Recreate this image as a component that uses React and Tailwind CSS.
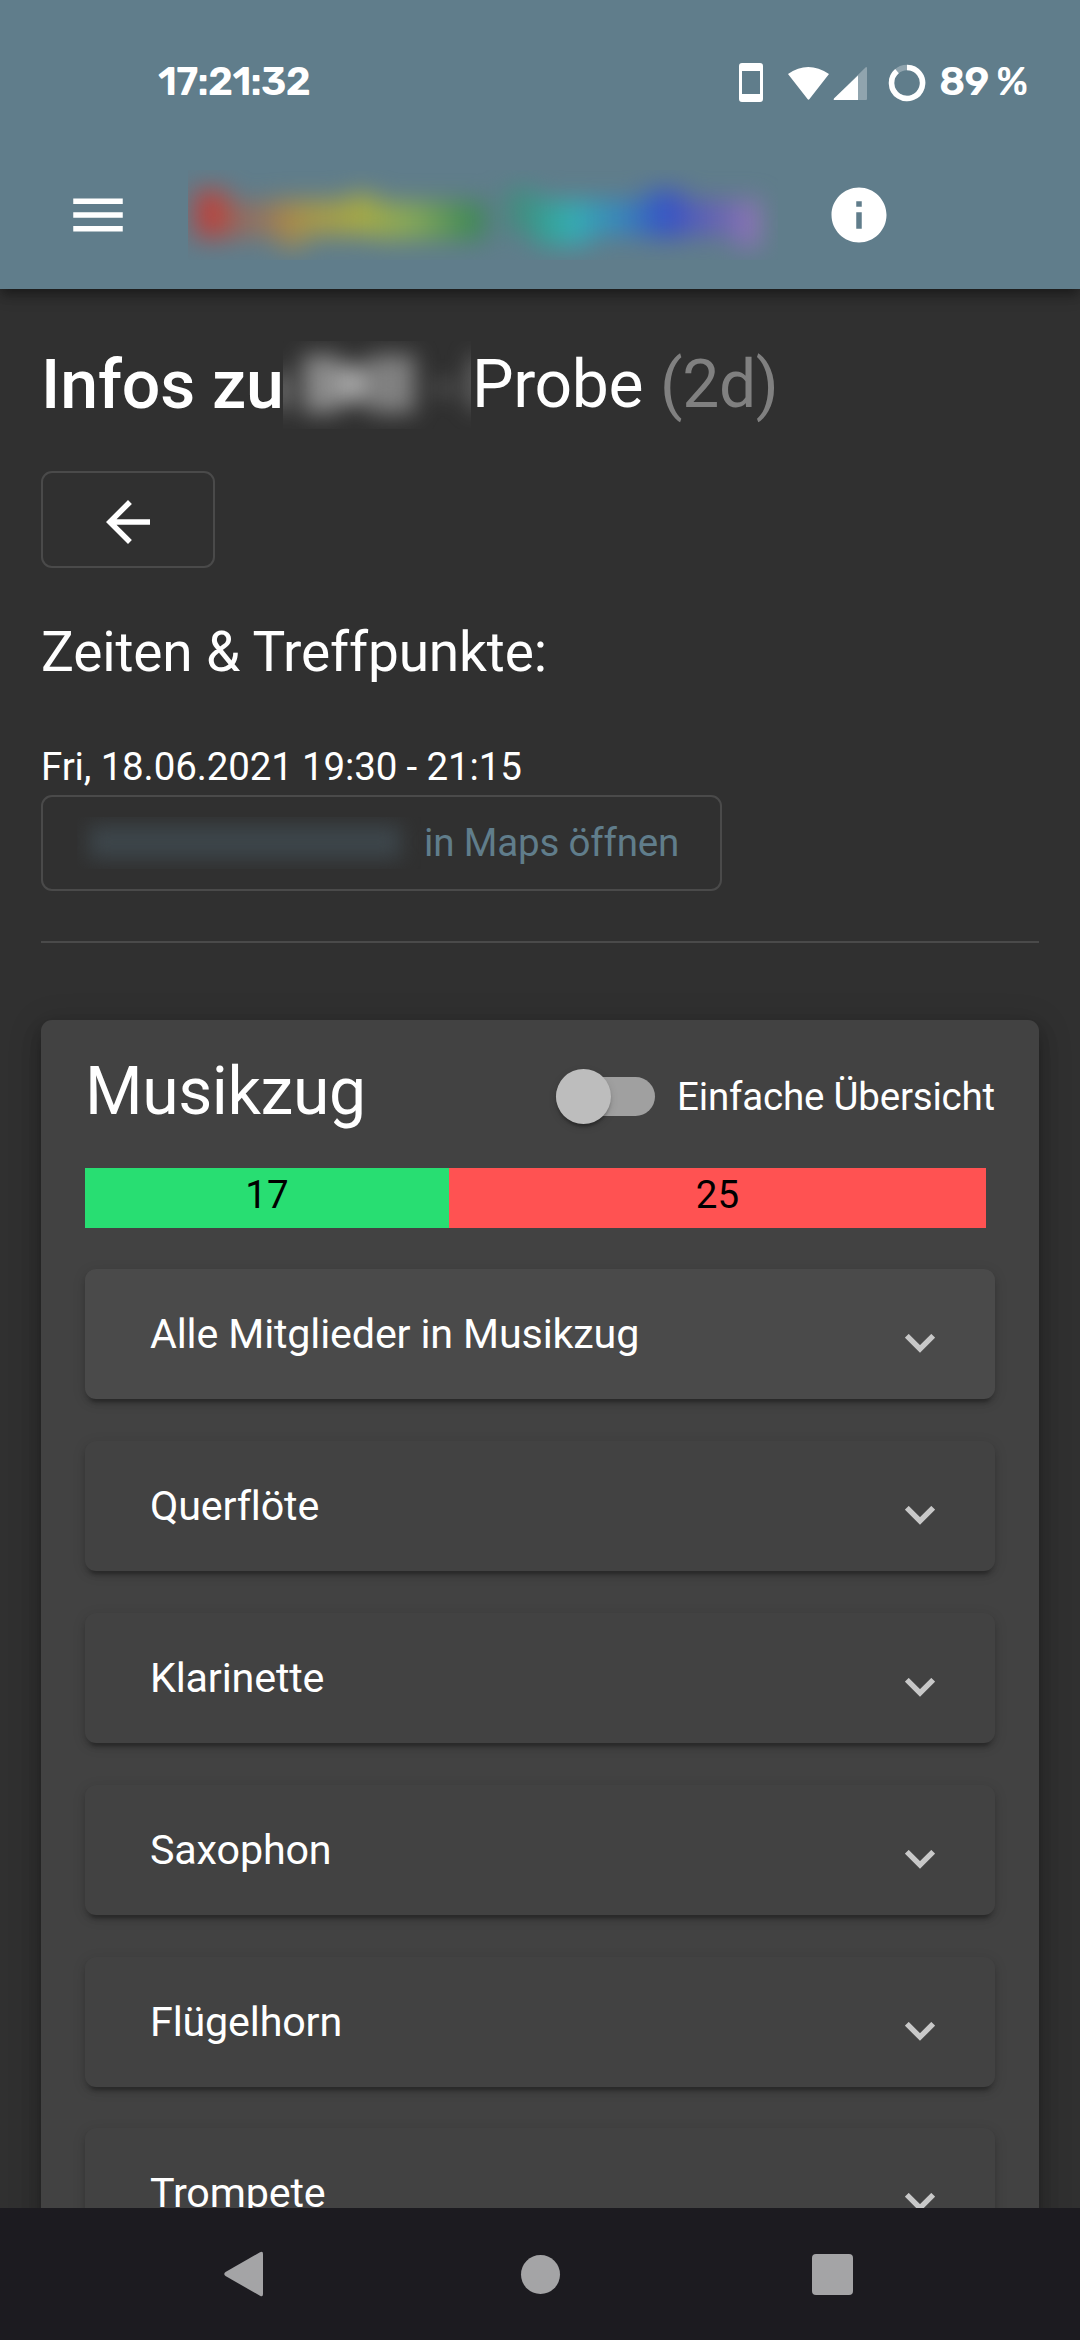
const groups = ["Alle Mitglieder in Musikzug", "Querflöte", "Klarinette", "Saxophon", "Flügelhorn", "Trompete"];

const MENU = "M3 18h18v-2H3v2zm0-5h18v-2H3v2zm0-7v2h18V6H3z";
const INFO = "M12 2C6.48 2 2 6.48 2 12s4.48 10 10 10 10-4.48 10-10S17.52 2 12 2zm1 15h-2v-6h2v6zm0-8h-2V7h2v2z";
const BACK = "M20 11H7.83l5.59-5.59L12 4l-8 8 8 8 1.41-1.41L7.83 13H20v-2z";

function Icon({ d }) {
  return (
    <svg viewBox="0 0 24 24" className="size-[66px] shrink-0 fill-current">
      <path d={d} />
    </svg>
  );
}

function StatusBar() {
  return (
    <div className="flex h-[141px] items-start pt-[60px] pl-[158px] pr-[53px] text-white">
      <span className="font-['Rubik','Roboto',sans-serif] text-[39.5px] leading-[44px] font-semibold tracking-[-0.7px]">17:21:32</span>
      <svg viewBox="0 0 200 44" className="ml-auto h-[44px] w-[200px]" fill="#fff">
        <path fillRule="evenodd" d="M16 3h18q3 0 3 3v33q0 3-3 3H16q-3 0-3-3V6q0-3 3-3zm0 8v23h18V11z" />
        <path d="M62 14Q82 0 103 14L83.500 39Q82.500 40.500 81.500 39z" />
        <path d="M140 7q1 0 1 1v31q0 1-1 1h-31q-2 0-1-1.500z" opacity=".3" />
        <path d="M132 15.500V40h-23q-2 0-1-1.500z" />
        <circle cx="181" cy="23" r="15.500" fill="none" stroke="#fff" strokeOpacity=".3" strokeWidth="5.500" />
        <path d="M181 7.500A15.500 15.500 0 1 1 171 11.200" fill="none" stroke="#fff" strokeWidth="5.500" />
      </svg>
      <span className="ml-[13px] font-['Rubik','Roboto',sans-serif] text-[39.5px] leading-[44px] font-semibold tracking-[-0.8px]">89 %</span>
    </div>
  );
}

function BlurredTitle() {
  return (
    <svg viewBox="0 0 590 90" className="ml-[57px] h-[90px] w-[590px]">
      <defs>
        <filter id="soft" x="-10%" y="-60%" width="120%" height="220%" colorInterpolationFilters="sRGB">
          <feGaussianBlur stdDeviation="12" />
        </filter>
        <linearGradient id="rainbow" gradientUnits="userSpaceOnUse" x1="0" y1="0" x2="590" y2="0">
          <stop offset="0.04" stopColor="#b8433f" />
          <stop offset="0.11" stopColor="#b06a48" />
          <stop offset="0.2" stopColor="#b39a3f" />
          <stop offset="0.3" stopColor="#acb03f" />
          <stop offset="0.38" stopColor="#8cb04f" />
          <stop offset="0.49" stopColor="#368a4c" />
          <stop offset="0.57" stopColor="#339880" />
          <stop offset="0.65" stopColor="#33b0b4" />
          <stop offset="0.72" stopColor="#3090c4" />
          <stop offset="0.81" stopColor="#3450c8" />
          <stop offset="0.9" stopColor="#6c60bb" />
          <stop offset="0.97" stopColor="#9878b8" />
        </linearGradient>
      </defs>
      <g filter="url(#soft)" fill="url(#rainbow)">
        <rect x="6" y="20" width="34" height="48" />
        <rect x="40" y="32" width="50" height="36" opacity=".6" />
        <rect x="86" y="30" width="76" height="36" opacity=".85" />
        <rect x="90" y="58" width="28" height="22" opacity=".6" />
        <rect x="160" y="24" width="28" height="42" opacity=".9" />
        <rect x="186" y="32" width="112" height="38" opacity=".85" />
        <rect x="318" y="18" width="32" height="46" opacity=".65" />
        <rect x="346" y="30" width="56" height="46" opacity=".95" />
        <rect x="402" y="30" width="56" height="36" opacity=".85" />
        <rect x="458" y="20" width="38" height="48" opacity=".95" />
        <rect x="496" y="30" width="48" height="36" opacity=".85" />
        <rect x="546" y="30" width="26" height="48" opacity=".95" />
      </g>
    </svg>
  );
}

function Panel({ label, active }) {
  return (
    <div
      className={
        "flex h-[130px] shrink-0 items-center rounded-[11px] pr-[60px] pl-[65px] shadow-[0_8px_3px_-5px_rgba(0,0,0,0.2),0_5px_5px_0_rgba(0,0,0,0.14),0_3px_14px_0_rgba(0,0,0,0.12)] " +
        (active ? "bg-[#4a4a4a]" : "bg-[#424242]")
      }
    >
      <span className="flex-1 text-[41.25px] leading-[48px] tracking-[-0.16px]">{label}</span>
      <svg viewBox="0 0 30 19" className="mt-[19px] h-[19px] w-[30px]">
        <path d="M1.800 1.800L15 15L28.200 1.800" fill="none" stroke="#c8c8c8" strokeWidth="5.400" />
      </svg>
    </div>
  );
}

export default function App() {
  return (
    <div className="flex h-[2340px] w-[1080px] flex-col overflow-hidden bg-[#303030] font-['Roboto',sans-serif] text-white">
      <header className="relative z-10 h-[289px] shrink-0 bg-[#607d8b] shadow-[0_5px_11px_-2px_rgba(0,0,0,0.35),0_8px_14px_0_rgba(0,0,0,0.2)]">
        <StatusBar />
        <div className="flex h-[148px] items-center pl-[65px]">
          <Icon d={MENU} />
          <BlurredTitle />
          <div className="ml-[48px]"><Icon d={INFO} /></div>
        </div>
      </header>

      <main className="flex min-h-0 flex-1 flex-col overflow-hidden px-[41px]">
        <h1 className="mt-[52px] flex h-[88px] items-center text-[66px] leading-[88px] tracking-[-0.4px] whitespace-nowrap">
          <span className="w-[242px] text-[68px] font-medium tracking-[-0.1px]">Infos zu</span>
          <span className="h-[88px] w-[188px] overflow-hidden">
            <svg viewBox="0 0 188 88" className="h-[88px] w-[188px]">
              <filter id="haze" x="-30%" y="-50%" width="160%" height="200%" colorInterpolationFilters="sRGB">
                <feGaussianBlur stdDeviation="11" />
              </filter>
              <g filter="url(#haze)" fill="#a8a8a8">
                <rect x="-8" y="32" width="10" height="36" />
                <rect x="20" y="14" width="36" height="58" opacity=".75" />
                <rect x="56" y="24" width="28" height="38" />
                <rect x="86" y="14" width="46" height="58" opacity=".68" />
                <rect x="152" y="42" width="20" height="10" opacity=".5" />
                <rect x="187" y="16" width="14" height="52" opacity=".6" />
              </g>
            </svg>
          </span>
          <span className="ml-[1px]">Probe</span>
          <span className="ml-[17px] text-[#808080]">(2d)</span>
        </h1>

        <button className="mt-[42px] flex h-[97px] w-[174px] shrink-0 items-center justify-center rounded-[11px] border-2 border-[#4a4a4a] pt-[5px]">
          <Icon d={BACK} />
        </button>

        <h2 className="mt-[48px] h-[72px] text-[55px] leading-[72px] tracking-[-0.16px]">Zeiten &amp; Treffpunkte:</h2>

        <p className="mt-[53px] mb-[2px] h-[52px] text-[38.5px] leading-[52px] tracking-[-0.14px]">Fri, 18.06.2021 19:30 - 21:15</p>
        <button className="flex h-[96px] w-[681px] shrink-0 items-center rounded-[11px] border-2 border-[#4a4a4a] pl-[34px] text-[38.5px] tracking-[-0.16px] text-[#607d8b]">
          <span className="h-[52px] w-[344px] overflow-hidden">
            <span className="mt-[8px] ml-[12px] block h-[34px] w-[312px] bg-[#3d464b] blur-[10px]" />
          </span>
          <span className="ml-[3px] leading-[52px]">in Maps öffnen</span>
        </button>

        <div className="mt-[50px] h-[2px] shrink-0 bg-[#4a4a4a]" />

        <section className="mt-[77px] h-[1400px] shrink-0 rounded-[11px] bg-[#424242] px-[44px] shadow-[0_8px_14px_-3px_rgba(0,0,0,0.2),0_14px_20px_2px_rgba(0,0,0,0.14),0_6px_30px_6px_rgba(0,0,0,0.12)]">
          <div className="flex h-[148px] items-start justify-between">
            <h2 className="mt-[28px] text-[66px] leading-[88px] tracking-[-0.4px]">Musikzug</h2>
            <div className="mt-[49px] flex h-[55px] items-center">
              <span className="flex h-[38.5px] w-[99px] items-center rounded-full bg-[#a0a0a0]">
                <span className="size-[55px] rounded-full bg-[#bdbdbd] shadow-[0_5px_3px_-3px_rgba(0,0,0,0.2),0_3px_3px_0_rgba(0,0,0,0.14),0_3px_8px_0_rgba(0,0,0,0.12)]" />
              </span>
              <span className="ml-[22px] text-[38.5px] leading-[52px] tracking-[-0.19px]">Einfache Übersicht</span>
            </div>
          </div>
          <div className="flex h-[60px] w-[901px] text-center text-[38.5px] leading-[54px] text-black">
            <div className="w-[364px] bg-[#28de72]">17</div>
            <div className="flex-1 bg-[#ff5252]">25</div>
          </div>
          <div className="mt-[41px] flex flex-col gap-[41.9px]">
            {groups.map((g, i) => (
              <Panel key={g} label={g} active={i === 0} />
            ))}
          </div>
        </section>
      </main>

      <nav className="z-10 flex h-[132px] shrink-0 items-center bg-[#1c1b20] pl-[224px] text-[#a4a4a6]">
        <svg viewBox="0 0 39 46" className="h-[46px] w-[39px] fill-current">
          <path d="M36 1.200Q39 -.5 39 3V43Q39 46.500 36 44.800L1.500 25Q-1 23 1.500 21z" />
        </svg>
        <span className="ml-[258px] size-[39px] rounded-full bg-current" />
        <span className="ml-[252px] size-[41px] rounded-[4px] bg-current" />
      </nav>
    </div>
  );
}
